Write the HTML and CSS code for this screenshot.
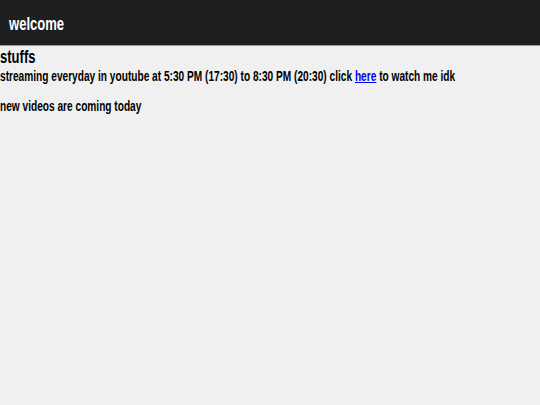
FILE: index.html
```html
<!DOCTYPE html>
<html>
<head>
<meta charset="utf-8">
<link rel="stylesheet" href="styles.css">
</head>
<body>
<header class="topbar"><span class="narrow title">welcome</span></header>
<main class="content">
<h2 class="heading"><span class="narrow">stuffs</span></h2>
<p class="line"><span class="narrow">streaming everyday in youtube at 5:30 PM (17:30) to 8:30 PM (20:30) click <a href="#" class="link">here</a> to watch me idk</span></p>
<p class="line second"><span class="narrow">new videos are coming today</span></p>
</main>
</body>
</html>
```
FILE: styles.css
```css
html, body {
  margin: 0;
  padding: 0;
  background: #f0f0f0;
  overflow: hidden;
  font-family: "Liberation Sans", Arial, sans-serif;
  font-weight: bold;
  color: #000;
}
.narrow {
  display: inline-block;
  white-space: nowrap;
  transform: scaleX(0.724);
  transform-origin: 0 50%;
}
.topbar {
  background: #1e1f21;
  border-bottom: 1px solid #9a9a9a;
  display: flex;
  align-items: center;
  padding-left: 9px;
  box-sizing: border-box;
  height: 46px;
}
.title {
  color: #fff;
  font-size: 18px;
  line-height: 20px;
  margin-top: 2px;
}
.content {
  overflow: hidden;
}
.heading {
  margin: 1px 0 0 0;
  font-size: 18px;
  line-height: 20px;
}
.line {
  margin: 1px 0 0 0;
  font-size: 14px;
  line-height: 16px;
}
.second {
  margin-top: 14px;
}
.link {
  color: #0000ee;
  text-decoration: underline;
}
```
